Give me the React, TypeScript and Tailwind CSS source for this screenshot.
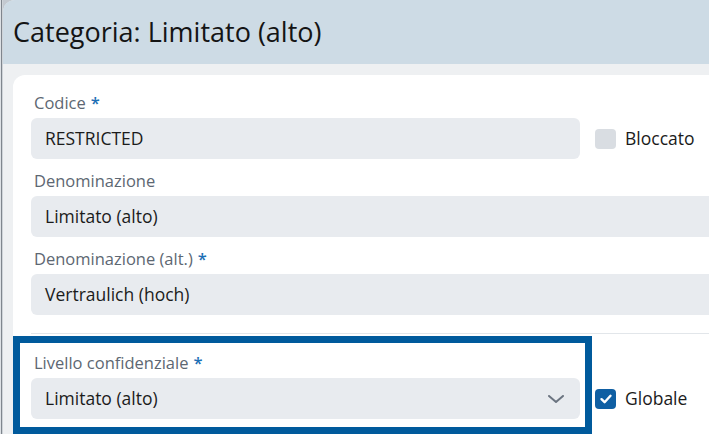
import React from "react";

function Label({ text, required }: { text: string; required?: boolean }) {
  return (
    <div className="text-[16.5px] leading-[20px] text-[#5d6772] mb-[5px] pl-[3px] whitespace-nowrap">
      {text}
      {required && <span className="text-[#1d6fb5] ml-[5px] font-semibold">*</span>}
    </div>
  );
}

function Input({ value, className = "" }: { value: string; className?: string }) {
  return (
    <div
      className={
        "h-[41px] rounded-[6px] bg-[#e8ebef] px-[14px] flex items-center text-[17.5px] text-[#1b1b1b] whitespace-nowrap " +
        className
      }
    >
      {value}
    </div>
  );
}

function Check({ checked, label }: { checked?: boolean; label: string }) {
  return (
    <div className="flex items-center ml-[15px] gap-[9px]">
      <div
        className={
          "w-[21px] h-[20px] rounded-[4px] flex items-center justify-center " +
          (checked ? "bg-[#0f5fa3]" : "bg-[#d9dde2]")
        }
      >
        {checked && (
          <svg width="14" height="14" viewBox="0 0 14 14" fill="none">
            <path d="M2.5 7.2 L5.6 10.2 L11.5 3.8" stroke="white" strokeWidth="2.4" strokeLinecap="round" strokeLinejoin="round" />
          </svg>
        )}
      </div>
      <span className="text-[17.5px] text-[#1b1b1b]">{label}</span>
    </div>
  );
}

export default function App() {
  return (
    <div className="w-[709px] h-[434px] overflow-hidden bg-[#c3c9d0] flex font-['Open_Sans',sans-serif]">
      <div className="flex w-[3px] shrink-0">
        <div className="w-px bg-[#dde1e5]" />
        <div className="w-px bg-[#7f868e]" />
        <div className="w-px bg-[#cfd4d9]" />
      </div>
      <div className="flex-1 min-w-0 rounded-tl-[12px] overflow-hidden bg-[#eef0f2] flex flex-col">
        <div className="h-[64px] shrink-0 bg-[#cddbe5] pl-[10px] flex items-center">
          <span className="text-[27px] text-[#141414] whitespace-nowrap">Categoria: Limitato (alto)</span>
        </div>
        <div className="pl-[10px] pt-[11px] flex-1">
          <div className="w-[760px] h-full bg-white rounded-tl-[12px] pl-[18px] pr-[18px] pt-[18px]">
            <div className="flex items-end">
              <div className="w-[549px] shrink-0">
                <Label text="Codice" required />
                <Input value="RESTRICTED" />
              </div>
              <div className="h-[41px] flex items-center">
                <Check label="Bloccato" />
              </div>
            </div>
            <div className="mt-[12px]">
              <Label text="Denominazione" />
              <Input value="Limitato (alto)" />
            </div>
            <div className="mt-[12px]">
              <Label text="Denominazione (alt.)" required />
              <Input value="Vertraulich (hoch)" />
            </div>
            <div className="mt-[18px] h-px bg-[#e2e6ea]" />
            <div className="relative mt-[19px] flex items-end">
              <div className="w-[549px] shrink-0">
                <Label text="Livello confidenziale" required />
                <div className="h-[41px] rounded-[6px] bg-[#e8ebef] pl-[14px] pr-[16px] flex items-center justify-between text-[17.5px] text-[#1b1b1b]">
                  <span>Limitato (alto)</span>
                  <svg width="16" height="8" viewBox="0 0 16 8" fill="none">
                    <path d="M1 1 L8 7 L15 1" stroke="#6b7480" strokeWidth="2" strokeLinecap="round" strokeLinejoin="round" />
                  </svg>
                </div>
              </div>
              <div className="h-[41px] flex items-center">
                <Check checked label="Globale" />
              </div>
              <div className="absolute left-[-18px] top-[-17px] w-[579px] h-[98px] border-[7px] border-[#005a9c] pointer-events-none" />
            </div>
          </div>
        </div>
      </div>
    </div>
  );
}
